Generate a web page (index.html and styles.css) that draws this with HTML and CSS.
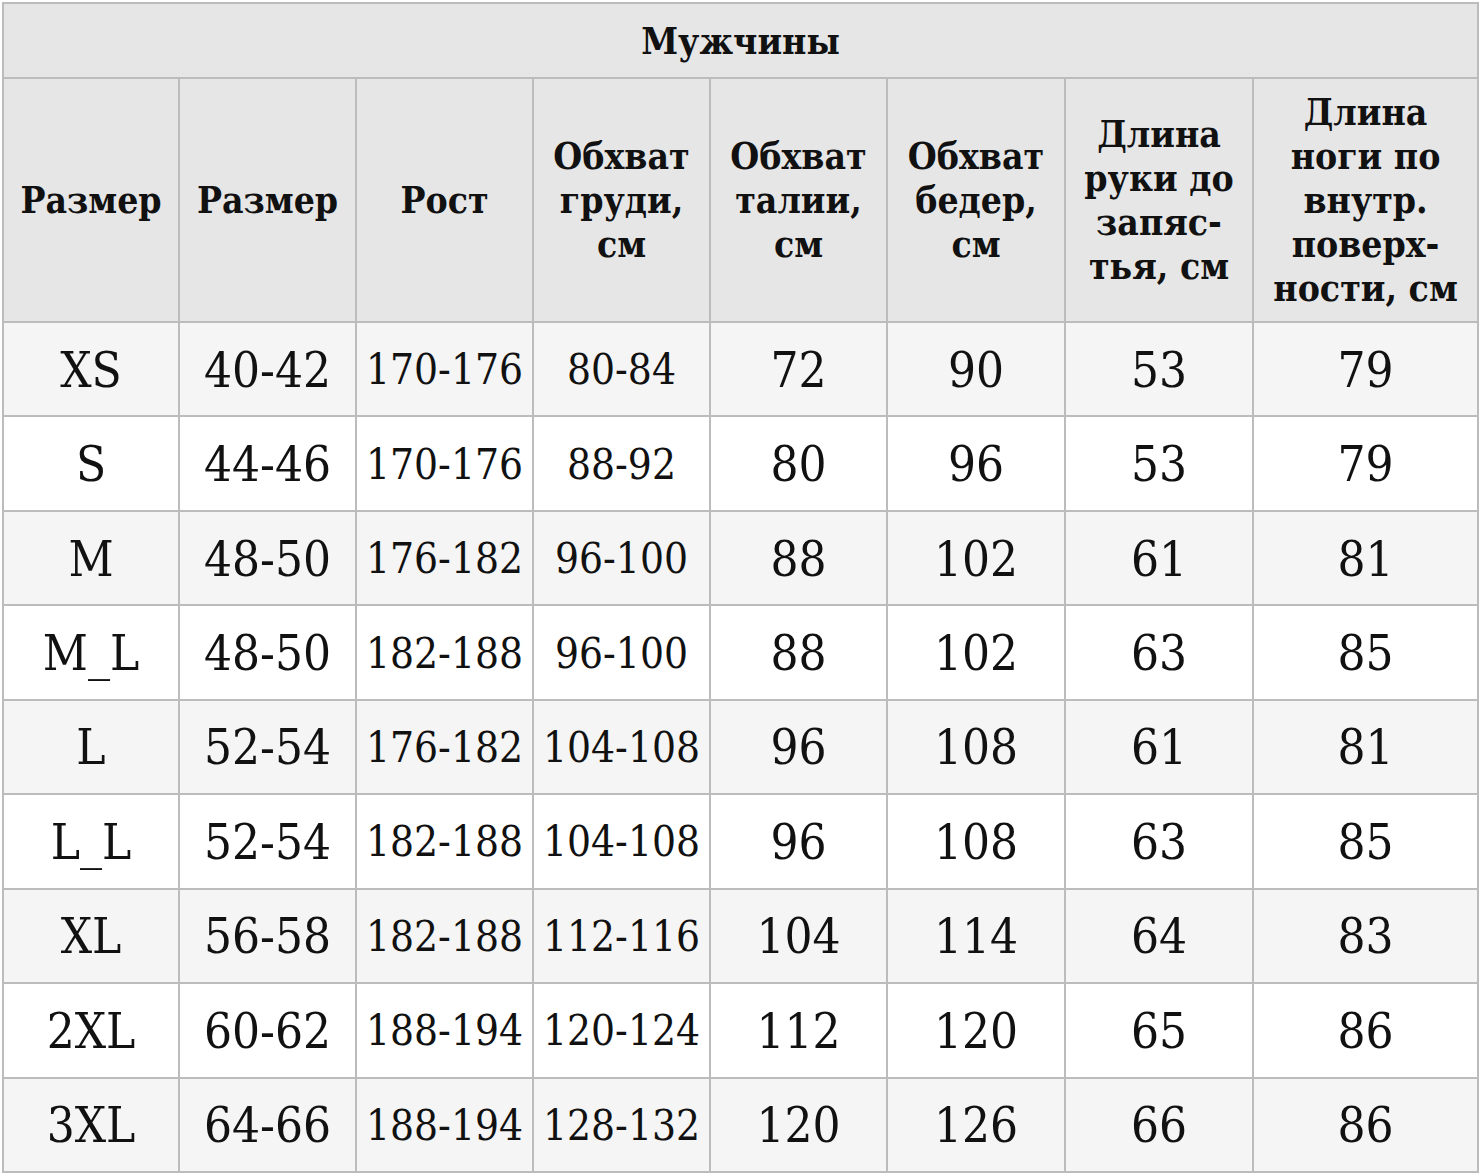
FILE: index.html
```html
<!DOCTYPE html>
<html lang="ru">
<head>
<meta charset="utf-8">
<title>Мужчины</title>
<link rel="stylesheet" href="styles.css">
</head>
<body>
<table class="sizes">
  <colgroup>
    <col class="c1"><col class="c2"><col class="c3"><col class="c4"><col class="c5"><col class="c6"><col class="c7"><col class="c8">
  </colgroup>
  <thead>
    <tr class="title-row"><th colspan="8">Мужчины</th></tr>
    <tr class="head-row">
      <th>Размер</th>
      <th>Размер</th>
      <th>Рост</th>
      <th>Обхват<br>груди,<br>см</th>
      <th>Обхват<br>талии,<br>см</th>
      <th>Обхват<br>бедер,<br>см</th>
      <th>Длина<br>руки до<br>запяс-<br>тья, см</th>
      <th>Длина<br>ноги по<br>внутр.<br>поверх-<br>ности, см</th>
    </tr>
  </thead>
  <tbody>
    <tr><td>XS</td><td>40-42</td><td class="sm">170-176</td><td class="sm">80-84</td><td>72</td><td>90</td><td>53</td><td>79</td></tr>
    <tr><td>S</td><td>44-46</td><td class="sm">170-176</td><td class="sm">88-92</td><td>80</td><td>96</td><td>53</td><td>79</td></tr>
    <tr><td>M</td><td>48-50</td><td class="sm">176-182</td><td class="sm">96-100</td><td>88</td><td>102</td><td>61</td><td>81</td></tr>
    <tr><td>M_L</td><td>48-50</td><td class="sm">182-188</td><td class="sm">96-100</td><td>88</td><td>102</td><td>63</td><td>85</td></tr>
    <tr><td>L</td><td>52-54</td><td class="sm">176-182</td><td class="sm">104-108</td><td>96</td><td>108</td><td>61</td><td>81</td></tr>
    <tr><td>L_L</td><td>52-54</td><td class="sm">182-188</td><td class="sm">104-108</td><td>96</td><td>108</td><td>63</td><td>85</td></tr>
    <tr><td>XL</td><td>56-58</td><td class="sm">182-188</td><td class="sm">112-116</td><td>104</td><td>114</td><td>64</td><td>83</td></tr>
    <tr><td>2XL</td><td>60-62</td><td class="sm">188-194</td><td class="sm">120-124</td><td>112</td><td>120</td><td>65</td><td>86</td></tr>
    <tr><td>3XL</td><td>64-66</td><td class="sm">188-194</td><td class="sm">128-132</td><td>120</td><td>126</td><td>66</td><td>86</td></tr>
  </tbody>
</table>
</body>
</html>
```
FILE: styles.css
```css
html, body {
  margin: 0;
  padding: 0;
  background: #ffffff;
}
body {
  padding: 2px 0 0 2px;
}
.sizes {
  border-collapse: collapse;
  table-layout: fixed;
  width: 1475px;
  font-family: "DejaVu Serif Condensed", "DejaVu Serif", serif;
  color: #111;
}
.c1 { width: 176px; }
.c2 { width: 177px; }
.c3 { width: 177px; }
.c4 { width: 177px; }
.c5 { width: 177px; }
.c6 { width: 178px; }
.c7 { width: 188px; }
.c8 { width: 225px; }

.sizes th, .sizes td {
  border: 2px solid #bcbcbc;
  text-align: center;
  vertical-align: middle;
  padding: 0;
  white-space: nowrap;
}
.sizes th {
  background: #e6e6e6;
  font-weight: bold;
  font-size: 37px;
  line-height: 44px;
}
.title-row th {
  height: 73px;
}
.head-row th {
  height: 242px;
}
.sizes td {
  height: 90.44px;
  font-size: 49px;
  line-height: 1;
  font-weight: normal;
  padding-top: 2px;
}
.sizes td.sm {
  font-size: 42px;
}
.sizes tbody tr:nth-child(odd) td {
  background: #f5f5f5;
}
.sizes tbody tr:nth-child(even) td {
  background: #ffffff;
}
```
